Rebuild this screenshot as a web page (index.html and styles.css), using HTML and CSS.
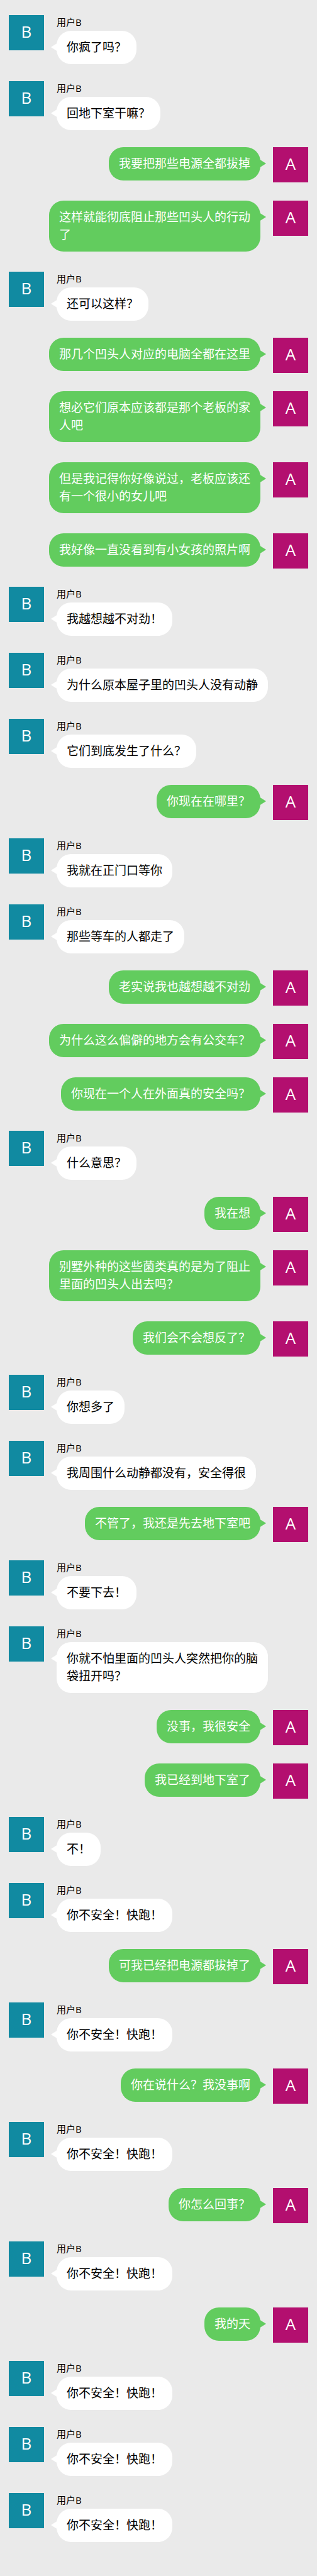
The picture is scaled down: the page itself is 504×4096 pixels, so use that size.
FILE: index.html
```html
<!DOCTYPE html>
<html lang="zh-CN">
<head>
<meta charset="utf-8">
<meta name="viewport" content="width=device-width, initial-scale=1">
<title>聊天记录</title>
<link rel="stylesheet" href="styles.css">
</head>
<body>
<main class="chat">
  <article class="message received"><div class="avatar">B</div><div class="body"><div class="name">用户B</div><p class="bubble">你疯了吗？</p></div></article>
  <article class="message received"><div class="avatar">B</div><div class="body"><div class="name">用户B</div><p class="bubble">回地下室干嘛？</p></div></article>
  <article class="message sent"><div class="avatar">A</div><div class="body"><p class="bubble">我要把那些电源全都拔掉</p></div></article>
  <article class="message sent"><div class="avatar">A</div><div class="body"><p class="bubble">这样就能彻底阻止那些凹头人的行动了</p></div></article>
  <article class="message received"><div class="avatar">B</div><div class="body"><div class="name">用户B</div><p class="bubble">还可以这样？</p></div></article>
  <article class="message sent"><div class="avatar">A</div><div class="body"><p class="bubble">那几个凹头人对应的电脑全都在这里</p></div></article>
  <article class="message sent"><div class="avatar">A</div><div class="body"><p class="bubble">想必它们原本应该都是那个老板的家人吧</p></div></article>
  <article class="message sent"><div class="avatar">A</div><div class="body"><p class="bubble">但是我记得你好像说过，老板应该还有一个很小的女儿吧</p></div></article>
  <article class="message sent"><div class="avatar">A</div><div class="body"><p class="bubble">我好像一直没看到有小女孩的照片啊</p></div></article>
  <article class="message received"><div class="avatar">B</div><div class="body"><div class="name">用户B</div><p class="bubble">我越想越不对劲！</p></div></article>
  <article class="message received"><div class="avatar">B</div><div class="body"><div class="name">用户B</div><p class="bubble">为什么原本屋子里的凹头人没有动静</p></div></article>
  <article class="message received"><div class="avatar">B</div><div class="body"><div class="name">用户B</div><p class="bubble">它们到底发生了什么？</p></div></article>
  <article class="message sent"><div class="avatar">A</div><div class="body"><p class="bubble">你现在在哪里？</p></div></article>
  <article class="message received"><div class="avatar">B</div><div class="body"><div class="name">用户B</div><p class="bubble">我就在正门口等你</p></div></article>
  <article class="message received"><div class="avatar">B</div><div class="body"><div class="name">用户B</div><p class="bubble">那些等车的人都走了</p></div></article>
  <article class="message sent"><div class="avatar">A</div><div class="body"><p class="bubble">老实说我也越想越不对劲</p></div></article>
  <article class="message sent"><div class="avatar">A</div><div class="body"><p class="bubble">为什么这么偏僻的地方会有公交车？</p></div></article>
  <article class="message sent"><div class="avatar">A</div><div class="body"><p class="bubble">你现在一个人在外面真的安全吗？</p></div></article>
  <article class="message received"><div class="avatar">B</div><div class="body"><div class="name">用户B</div><p class="bubble">什么意思？</p></div></article>
  <article class="message sent"><div class="avatar">A</div><div class="body"><p class="bubble">我在想</p></div></article>
  <article class="message sent"><div class="avatar">A</div><div class="body"><p class="bubble">别墅外种的这些菌类真的是为了阻止里面的凹头人出去吗？</p></div></article>
  <article class="message sent"><div class="avatar">A</div><div class="body"><p class="bubble">我们会不会想反了？</p></div></article>
  <article class="message received"><div class="avatar">B</div><div class="body"><div class="name">用户B</div><p class="bubble">你想多了</p></div></article>
  <article class="message received"><div class="avatar">B</div><div class="body"><div class="name">用户B</div><p class="bubble">我周围什么动静都没有，安全得很</p></div></article>
  <article class="message sent"><div class="avatar">A</div><div class="body"><p class="bubble">不管了，我还是先去地下室吧</p></div></article>
  <article class="message received"><div class="avatar">B</div><div class="body"><div class="name">用户B</div><p class="bubble">不要下去！</p></div></article>
  <article class="message received"><div class="avatar">B</div><div class="body"><div class="name">用户B</div><p class="bubble">你就不怕里面的凹头人突然把你的脑袋扭开吗？</p></div></article>
  <article class="message sent"><div class="avatar">A</div><div class="body"><p class="bubble">没事，我很安全</p></div></article>
  <article class="message sent"><div class="avatar">A</div><div class="body"><p class="bubble">我已经到地下室了</p></div></article>
  <article class="message received"><div class="avatar">B</div><div class="body"><div class="name">用户B</div><p class="bubble">不！</p></div></article>
  <article class="message received"><div class="avatar">B</div><div class="body"><div class="name">用户B</div><p class="bubble">你不安全！快跑！</p></div></article>
  <article class="message sent"><div class="avatar">A</div><div class="body"><p class="bubble">可我已经把电源都拔掉了</p></div></article>
  <article class="message received"><div class="avatar">B</div><div class="body"><div class="name">用户B</div><p class="bubble">你不安全！快跑！</p></div></article>
  <article class="message sent"><div class="avatar">A</div><div class="body"><p class="bubble">你在说什么？我没事啊</p></div></article>
  <article class="message received"><div class="avatar">B</div><div class="body"><div class="name">用户B</div><p class="bubble">你不安全！快跑！</p></div></article>
  <article class="message sent"><div class="avatar">A</div><div class="body"><p class="bubble">你怎么回事？</p></div></article>
  <article class="message received"><div class="avatar">B</div><div class="body"><div class="name">用户B</div><p class="bubble">你不安全！快跑！</p></div></article>
  <article class="message sent"><div class="avatar">A</div><div class="body"><p class="bubble">我的天</p></div></article>
  <article class="message received"><div class="avatar">B</div><div class="body"><div class="name">用户B</div><p class="bubble">你不安全！快跑！</p></div></article>
  <article class="message received"><div class="avatar">B</div><div class="body"><div class="name">用户B</div><p class="bubble">你不安全！快跑！</p></div></article>
  <article class="message received"><div class="avatar">B</div><div class="body"><div class="name">用户B</div><p class="bubble">你不安全！快跑！</p></div></article>
</main>
</body>
</html>
```
FILE: styles.css
```css
* {
  box-sizing: border-box;
}

body {
  margin: 0;
  background: #eaeaea;
  color: #000;
  font-family: "Open Sans", "Noto Sans CJK SC", sans-serif;
}

.chat {
  padding: 24px 14px 27px;
}

.message {
  display: flex;
  align-items: flex-start;
  gap: 20px;
}

.received {
  margin-bottom: 27px;
  padding-right: 64px;
}

.sent {
  flex-direction: row-reverse;
  margin-bottom: 29px;
  padding-left: 64px;
}

.avatar {
  flex: none;
  width: 56px;
  height: 56px;
  background: #118aa1;
  color: #fff;
  font-size: 26px;
  line-height: 52px;
  text-align: center;
}

.sent .avatar {
  background: #b30f6f;
}

.body {
  display: flex;
  flex-direction: column;
  align-items: flex-start;
  min-width: 0;
}

.sent .body {
  padding-bottom: 3px;
}

.name {
  padding-bottom: 3px;
  font-size: 15px;
  line-height: 22px;
}

.bubble {
  position: relative;
  margin: 0;
  padding: 12px 16px 13px;
  border-radius: 23px;
  background: #fff;
  font-size: 19px;
  line-height: 28px;
}

.sent .bubble {
  background: #62cc5e;
  color: #fff;
}

/* Speech-bubble tail */
.bubble::before {
  content: "";
  position: absolute;
  top: 19px;
  left: -9px;
  width: 11px;
  height: 14px;
  background: inherit;
  clip-path: polygon(0 50%, 100% 0, 100% 100%);
}

.sent .bubble::before {
  left: auto;
  right: -9px;
  clip-path: polygon(100% 50%, 0 0, 0 100%);
}
```
